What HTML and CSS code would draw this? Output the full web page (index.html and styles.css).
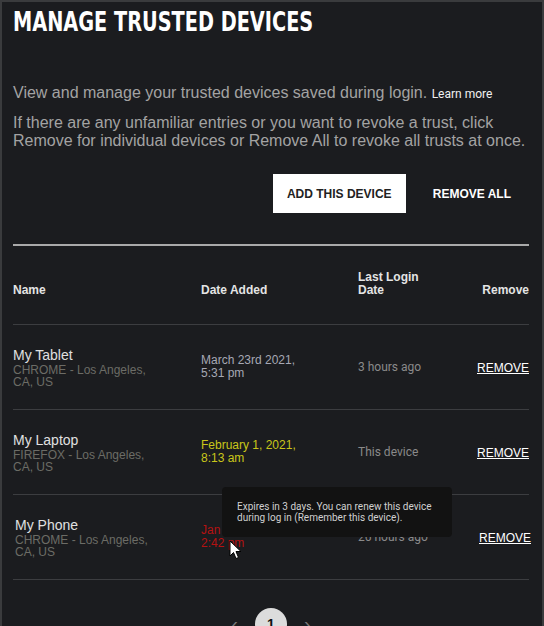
FILE: index.html
```html
<!DOCTYPE html>
<html lang="en">
<head>
  <meta charset="UTF-8">
  <title>Manage Trusted Devices</title>
  <link rel="stylesheet" href="styles.css">
</head>
<body>

<div class="frame">
  <h1>MANAGE TRUSTED DEVICES</h1>

  <p class="intro">View and manage your trusted devices saved during login. <a href="#" class="learn">Learn more</a></p>
  <p class="intro second">If there are any unfamiliar entries or you want to revoke a trust, click Remove for individual devices or Remove All to revoke all trusts at once.</p>

  <div class="actions">
    <button class="btn-add">ADD THIS DEVICE</button>
    <button class="btn-all">REMOVE ALL</button>
  </div>

  <table class="devices">
    <thead>
      <tr>
        <th class="col-name">Name</th>
        <th class="col-date">Date Added</th>
        <th class="col-last">Last Login<br>Date</th>
        <th class="col-remove">Remove</th>
      </tr>
    </thead>
    <tbody>
      <tr>
        <td>
          <div class="dev-name">My Tablet</div>
          <div class="dev-meta">CHROME - Los Angeles,<br>CA, US</div>
        </td>
        <td class="date">March 23rd 2021,<br>5:31 pm</td>
        <td class="last">3 hours ago</td>
        <td class="col-remove"><a href="#" class="remove">REMOVE</a></td>
      </tr>
      <tr>
        <td>
          <div class="dev-name">My Laptop</div>
          <div class="dev-meta">FIREFOX - Los Angeles,<br>CA, US</div>
        </td>
        <td class="date warn">February 1, 2021,<br>8:13 am</td>
        <td class="last">This device</td>
        <td class="col-remove"><a href="#" class="remove">REMOVE</a></td>
      </tr>
      <tr class="shifted">
        <td>
          <div class="dev-name">My Phone</div>
          <div class="dev-meta">CHROME - Los Angeles,<br>CA, US</div>
        </td>
        <td class="date expiring">Jan 31st 2021,<br>2:42 pm</td>
        <td class="last">26 hours ago</td>
        <td class="col-remove"><a href="#" class="remove">REMOVE</a></td>
      </tr>
    </tbody>
  </table>

  <div class="pager">
    <span class="arrow">&#8249;</span>
    <span class="page">1</span>
    <span class="arrow">&#8250;</span>
  </div>

  <div class="tooltip">Expires in 3 days. You can renew this device<br>during log in (Remember this device).</div>

  <svg class="cursor" width="14" height="20" viewBox="0 0 14 20">
    <path d="M1 1 L1 16 L4.5 12.5 L7 18.5 L9.5 17.5 L7 11.5 L12 11.5 Z" fill="#fff" stroke="#000" stroke-width="1"/>
  </svg>
</div>

</body>
</html>
```

FILE: styles.css
```css
body {
  margin: 0;
  background: #1b1c1f;
  font-family: "Liberation Sans", Arial, sans-serif;
}

.frame {
  position: relative;
  box-sizing: border-box;
  width: 544px;
  height: 626px;
  overflow: hidden;
  border: 2px solid #3a3b3d;
  border-bottom: 0;
  padding: 0 13px 0 11px;
  background: #1b1c1f;
}

h1 {
  margin: 4px 0 0;
  font-family: "DejaVu Sans Condensed", "DejaVu Sans", sans-serif;
  font-weight: bold;
  font-size: 26px;
  line-height: 32px;
  color: #fff;
  transform: scaleX(0.825);
  transform-origin: left center;
  white-space: nowrap;
}

.intro {
  margin: 46px 0 0;
  font-size: 16px;
  line-height: 18px;
  color: #a3a3a3;
}

.intro.second {
  margin-top: 11px;
}

.learn {
  font-family: Roboto, sans-serif;
  font-size: 12px;
  color: #f0f0f0;
  text-decoration: none;
}

.actions {
  display: flex;
  justify-content: flex-end;
  align-items: center;
  margin-top: 24px;
}

.actions button {
  font-family: "Liberation Sans", Arial, sans-serif;
  font-weight: bold;
  font-size: 12px;
  border: 0;
  cursor: pointer;
}

.btn-add {
  background: #fff;
  color: #222;
  width: 133px;
  height: 39px;
}

.btn-all {
  background: none;
  color: #fff;
  padding: 0 18px 0 27px;
  height: 39px;
}

.devices {
  width: 100%;
  margin-top: 31px;
  border-collapse: collapse;
  border-top: 2px solid #a9a9a9;
}

.devices th {
  text-align: left;
  vertical-align: bottom;
  font-size: 12px;
  font-weight: bold;
  line-height: 13px;
  color: #e4e4e4;
  padding: 0 0 27px;
  height: 51px;
  border-bottom: 1px solid #3c3d40;
}

.devices td {
  height: 84px;
  padding: 0;
  vertical-align: middle;
  border-bottom: 1px solid #3c3d40;
}

.col-name { width: 188px; }
.col-date { width: 157px; }
.col-last { width: 100px; }

.devices .col-remove {
  text-align: right;
}

.dev-name {
  font-size: 14px;
  line-height: 17px;
  color: #e0e0e0;
}

.dev-meta {
  font-size: 12px;
  line-height: 12px;
  color: #6c6c66;
}

.date {
  font-size: 12px;
  line-height: 13px;
  color: #a6a8b4;
}

.date.warn {
  color: #c9c61a;
}

.date.expiring {
  color: #b51212;
}

.last {
  font-family: Roboto, sans-serif;
  font-size: 12px;
  color: #8a8a8a;
}

.remove {
  font-size: 12px;
  color: #fff;
  text-decoration: underline;
}

.shifted td:first-child {
  padding-left: 2px;
}

.shifted .remove {
  margin-right: -2px;
}

.pager {
  display: flex;
  justify-content: center;
  align-items: center;
  gap: 17px;
  margin-top: 28px;
}

.arrow {
  color: #777;
  font-size: 20px;
}

.page {
  width: 32px;
  height: 32px;
  border-radius: 50%;
  background: #dcdcdc;
  color: #111;
  font-size: 14px;
  font-weight: bold;
  display: flex;
  align-items: center;
  justify-content: center;
}

.tooltip {
  position: absolute;
  left: 220px;
  top: 485px;
  width: 200px;
  padding: 14px 15px 14px;
  background: #121212;
  border-radius: 4px;
  font-family: Roboto, sans-serif;
  font-size: 10px;
  line-height: 11px;
  color: #d0d0d0;
}

.cursor {
  position: absolute;
  left: 227px;
  top: 538px;
}
```
